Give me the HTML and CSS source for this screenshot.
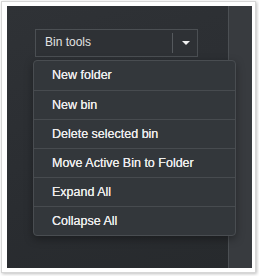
FILE: index.html
```html
<!DOCTYPE html>
<html lang="en">
<head>
    <meta charset="UTF-8">
    <meta name="viewport" content="width=device-width, initial-scale=1.0">
    <title>Bin tools</title>
    <link rel="stylesheet" href="styles.css">
</head>
<body>
    <div class="frame">
        <div class="panel">
            <div class="panel-main">
                <div class="dropdown">
                    <div class="dropdown-toggle">
                        <span class="dropdown-label">Bin tools</span>
                        <span class="dropdown-caret"></span>
                    </div>
                    <ul class="dropdown-menu">
                        <li>New folder</li>
                        <li>New bin</li>
                        <li>Delete selected bin</li>
                        <li>Move Active Bin to Folder</li>
                        <li>Expand All</li>
                        <li>Collapse All</li>
                    </ul>
                </div>
            </div>
            <div class="panel-side"></div>
        </div>
    </div>
</body>
</html>
```

FILE: styles.css
```css
* {
    margin: 0;
    padding: 0;
    box-sizing: border-box;
    font-family: "Liberation Sans", Arial, sans-serif;
}
body {
    background-color: #ffffff;
    width: 259px;
    height: 276px;
    padding: 1px 3px 3px 1px;
}
.frame {
    background-color: #ffffff;
    border: 1px solid #d6d6d6;
    box-shadow: 1px 1px 3px rgba(0,0,0,0.25);
    padding: 4px 3px 4px 5px;
    height: 100%;
}
.panel {
    display: flex;
    height: 100%;
    background-color: #2b2e32;
}
.panel-main {
    width: 222px;
    border-right: 1px solid #4c5054;
    background: linear-gradient(160deg, #2f3236 0%, #2a2d31 60%, #272a2d 100%);
    padding: 23px 0 0 28px;
}
.panel-side {
    flex: 1;
    background-color: #383b3f;
}
.dropdown {
    position: relative;
}
.dropdown-toggle {
    display: flex;
    align-items: center;
    width: 163px;
    height: 28px;
    border: 1px solid #4b4f53;
    background-color: #2e3135;
    color: #e2e2e2;
    font-size: 12px;
}
.dropdown-label {
    flex: 1;
    padding: 0 0 2px 9px;
    height: 20px;
    line-height: 18px;
    border-right: 1px solid #55595d;
}
.dropdown-caret {
    width: 24px;
    display: flex;
    justify-content: center;
}
.dropdown-caret::before {
    content: '';
    border-left: 4px solid transparent;
    border-right: 4px solid transparent;
    border-top: 4px solid #f0f0f0;
    margin-left: 1px;
}
.dropdown-menu {
    list-style: none;
    position: absolute;
    top: 31px;
    left: -2px;
    width: 203px;
    background-color: #33373b;
    border: 1px solid #494d51;
    border-radius: 4px;
    box-shadow: 0 3px 8px rgba(0,0,0,0.35);
}
.dropdown-menu li {
    height: 29px;
    line-height: 28px;
    padding-left: 18px;
    border-top: 1px solid #474b4f;
    color: #ebebeb;
    font-size: 12.5px;
    text-shadow: 0 0 0.4px #ffffff;
}
.dropdown-menu li:first-child {
    border-top: none;
    height: 29px;
    line-height: 29px;
}
```
